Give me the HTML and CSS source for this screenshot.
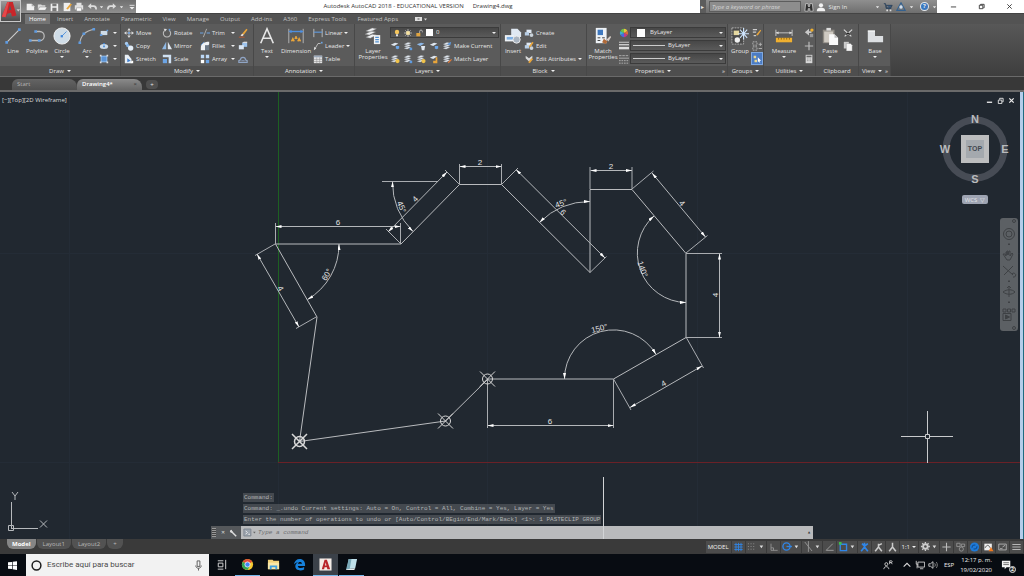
FILE: index.html
```html
<!DOCTYPE html>
<html lang="en">
<head>
<meta charset="utf-8">
<title>Autodesk AutoCAD 2018 - Drawing4.dwg</title>
<link rel="stylesheet" href="styles.css">
</head>
<body>
<svg class="defs" aria-hidden="true">
  <defs>
    <marker id="arw" viewBox="0 0 6 3" refX="6" refY="1.5" markerWidth="6" markerHeight="3" markerUnits="userSpaceOnUse" orient="auto-start-reverse"><path d="M0 0 6 1.500 0 3z" fill="#fff"/></marker>
    <symbol id="down" viewBox="0 0 6 4"><path d="M1 1h4L3 3.600z" fill="#e8e8e8"/></symbol>
    <!-- draw -->
    <symbol id="line" viewBox="0 0 20 20"><path d="M3 17 17 3" stroke="#ccc" stroke-width="1.2"/><path d="M1.500 15.500h3v3h-3zM15.500 1.500h3v3h-3z" fill="#5f9be0"/></symbol>
    <symbol id="pline" viewBox="0 0 20 20"><path d="M2 15h11a5 5 0 0 0 0-10H9" fill="none" stroke="#bbb" stroke-width="1.4"/><path d="M1 13.500h3v3H1zM7 3.500h3v3H7zM11 13.500h3v3h-3z" fill="#5f9be0"/></symbol>
    <symbol id="circle" viewBox="0 0 20 20"><circle cx="10" cy="10" r="9" fill="#cfdce6" stroke="#f4f4f4"/><path d="M10 10 15 5" stroke="#4f8fd8"/><path d="M8.500 9h2.500v2.500H8.500z" fill="#3f86dc"/></symbol>
    <symbol id="arc" viewBox="0 0 20 20"><path d="M2 18C3 9 9 4 18 2.500" fill="none" stroke="#bbb" stroke-width="1.200"/><path d="M.5 16h3v3h-3zM5 6h3v3H5zM16 1h3v3h-3z" fill="#5f9be0"/></symbol>
    <symbol id="rect" viewBox="0 0 12 12"><path d="M2 3.500h8v5H2z" fill="#cfdce8"/><path d="M1 7.500h3v2H1zM9 2h2v2H9z" fill="#5f9be0"/></symbol>
    <symbol id="ellipse" viewBox="0 0 12 12"><ellipse cx="6" cy="6.500" rx="5" ry="3" fill="#cfdce8"/><path d="M5 5.500h2v2H5zM5 2.500h2v1.500H5z" fill="#3f86dc"/></symbol>
    <symbol id="hatch" viewBox="0 0 12 12"><path d="M2 2h8v8H2z" fill="#9cc3ee"/><path d="M3 3h6v6H3z" fill="#5c94d6"/><path d="M1 1h2v2H1zM9 1h2v2H9zM1 9h2v2H1zM9 9h2v2H9z" fill="#ddd"/></symbol>
    <!-- modify -->
    <symbol id="move" viewBox="0 0 12 12"><path d="m6 0 2 3H4zM6 12l2-3H4zM0 6l3-2v4zM12 6 9 4v4z" fill="#ddd"/><path d="M6 3v6M3 6h6" stroke="#ccc"/><path d="M5 5h2v2H5z" fill="#5fa0f0"/></symbol>
    <symbol id="copy" viewBox="0 0 12 12"><circle cx="3" cy="3" r="2" fill="#a8cbf0"/><circle cx="4.500" cy="5.500" r="2" fill="#7fb3ea"/><circle cx="8" cy="8.500" r="3.200" fill="#e4eef8"/></symbol>
    <symbol id="stretch" viewBox="0 0 12 12"><path d="M1 1h4l4 5v5H1z" fill="#e8eef4"/><path d="M4 5v5l4-2z" fill="#3f7fcf"/><path d="M9 8h2v3H8z" fill="#fff"/></symbol>
    <symbol id="rotate" viewBox="0 0 12 12"><path d="M3.500 2.800a4.400 4.400 0 1 0 5 0" fill="none" stroke="#bbb" stroke-width="1.300"/><path d="m2 .8 4 .4-2.200 3z" fill="#ddd"/><path d="M8 1h2v2H8z" fill="#5f9be0"/></symbol>
    <symbol id="mirror" viewBox="0 0 12 12"><path d="M5 1v9H0z" fill="#8fb8e4"/><path d="M7 1v9h5z" fill="#dfe6ee"/></symbol>
    <symbol id="scale" viewBox="0 0 12 12"><path d="M1 1h10v10H8V4H1z" fill="#cfe0f2"/><path d="M1 6h5v5H1z" fill="#6ca4e4"/></symbol>
    <symbol id="trim" viewBox="0 0 12 12"><path d="M0 6h4M8 6h4" stroke="#6ca4e4" stroke-width="1.300"/><path d="M4 11 8 1" stroke="#bbb"/></symbol>
    <symbol id="fillet" viewBox="0 0 12 12"><path d="M1 11V8c0-4 3-7 10-7v3L6 11z" fill="#eef2f6"/><path d="M6 5h5v6H6z" fill="#6b7886"/><path d="M1 5 5 1" stroke="#5f9be0"/></symbol>
    <symbol id="array" viewBox="0 0 12 12"><path d="M1 1h4v4H1zM7 1h4v4H7z" fill="#bcd8f6"/><path d="M1 7h4v4H1z" fill="#fff"/><path d="M7 7h4v4H7z" fill="#6ca4e4"/></symbol>
    <symbol id="erase" viewBox="0 0 12 12"><path d="M5 7 10 1l1.500 1L7 8z" fill="#e9a53a"/><path d="m3 9 2-2 2 1-2 2z" fill="#f4e6dc"/><path d="M1 11h7" stroke="#c65a2a"/></symbol>
    <symbol id="explode" viewBox="0 0 12 12"><path d="M5 2h6v5H5z" fill="#9cc3ee"/><path d="M1 5h6v5H1z" fill="#dbe7f4"/><path d="m5 2 2-1h4v1" fill="#fff"/></symbol>
    <symbol id="offset" viewBox="0 0 12 12"><path d="M1 10V8l2-1a3 3 0 1 1 6 0l2 1v2z" fill="none" stroke="#8fa4c4" stroke-width="1.400"/><path d="M4 8h4" stroke="#8fa4c4"/></symbol>
    <!-- annotation -->
    <symbol id="atext" viewBox="0 0 20 20"><path d="M3 18 10 2l7 16M5.500 12.500h9" fill="none" stroke="#e6e6e6" stroke-width="1.800"/></symbol>
    <symbol id="dim" viewBox="0 0 20 20"><path d="M2 2v16M18 2v16" stroke="#bbb"/><path d="M2 5h16" stroke="#4f8fe0" stroke-width="1.500"/><path d="m2 5 3-2v4zM18 5l-3-2v4z" fill="#4f8fe0"/><path d="m5 16 1.500-3L8 16m2-6v3m0 0-1.500-1M10 13l1.500-1M12 16l1.500-3 1.500 3" fill="none" stroke="#e9a53a" stroke-width="1.600"/></symbol>
    <symbol id="linear" viewBox="0 0 12 12"><path d="M1 1v10M11 1v10" stroke="#ccc"/><path d="M1 5h10" stroke="#5f9be0" stroke-width="1.300"/></symbol>
    <symbol id="leader" viewBox="0 0 12 12"><path d="M2 10 6 3h3" fill="none" stroke="#ccc"/><path d="m1 11 .5-4L4 9z" fill="#ddd"/><path d="M9.500 1h2v2h-2z" fill="#6ca4e4"/></symbol>
    <symbol id="table" viewBox="0 0 12 12"><path d="M1 2h10v9H1z" fill="#e4e4e4"/><path d="M1 2h10v2H1z" fill="#9aa8b8"/><path d="M1 6.500h10M1 9h10M4.500 4v7M8 4v7" stroke="#888" stroke-width=".6"/></symbol>
    <!-- layers -->
    <symbol id="layers" viewBox="0 0 20 20"><path d="M2 4.500 9 1l5 1-7 3.500zM1 8l7-3.500 5 1L6 9zM2 11.500 9 8l5 1-7 3.500z" fill="#eef0f2" stroke="#777" stroke-width=".5"/><path d="M11 9h7v10h-7z" fill="#f2f2f2"/><path d="M12.500 11.500h4M12.500 14h4M12.500 16.500h4" stroke="#4f8fd0" stroke-width="1.200"/></symbol>
    <symbol id="lay" viewBox="0 0 12 12"><path d="m1 4 5-2.500 4 1L5 5zM1 6.500 6 4l4 1-5 2.500zM1 9l5-2.500 4 1L5 10z" fill="#dfe6ee" stroke="#666" stroke-width=".4"/></symbol>
    <symbol id="lay1" viewBox="0 0 12 12"><path d="M1 4.500 6 2l4 1-5 3z" fill="#dfe6ee"/><path d="M7 6h4v3L9 10 7 9z" fill="#6ca4e4"/></symbol>
    <symbol id="lay2" viewBox="0 0 12 12"><use href="#lay"/><path d="M8 8h3v3H8z" fill="#5f9be0"/></symbol>
    <symbol id="lay3" viewBox="0 0 12 12"><path d="m1 4 5-2 4 1-5 3z" fill="#8db8e8"/><path d="M6 6h5l-1 5H7z" fill="#dfe6ee"/></symbol>
    <symbol id="lay4" viewBox="0 0 12 12"><use href="#lay"/><circle cx="9" cy="8.500" r="2.500" fill="#f0c34a"/></symbol>
    <symbol id="lay5" viewBox="0 0 12 12"><path d="M1 4.500 6 2l4 1-5 3z" fill="#dfe6ee"/><path d="M5 8h5v3H5zM8 4h2v4H8z" fill="#e9a53a"/></symbol>
    <symbol id="lay6" viewBox="0 0 12 12"><use href="#lay"/><path d="m7 10 4-4 1 1-4 4z" fill="#e07a3a"/></symbol>
    <symbol id="lay7" viewBox="0 0 12 12"><use href="#lay"/><path d="m6 4 5-3-1 4z" fill="#5f9be0"/></symbol>
    <symbol id="bulb" viewBox="0 0 12 12"><circle cx="6" cy="4.500" r="3.300" fill="#f6c65c"/><path d="M4.500 8h3v3h-3z" fill="#ddd"/></symbol>
    <symbol id="sun" viewBox="0 0 12 12"><path d="M6 0v12M0 6h12M2 2l8 8M10 2l-8 8" stroke="#ddd"/><circle cx="6" cy="6" r="3" fill="#f6e2a0"/></symbol>
    <symbol id="lock" viewBox="0 0 12 12"><path d="M7 6V3.500a2 2 0 0 1 4 0V5" fill="none" stroke="#ccc" stroke-width="1.200"/><path d="M2 6h6v5H2z" fill="#e0a440"/></symbol>
    <!-- block -->
    <symbol id="insert" viewBox="0 0 20 20"><path d="M8 2h7l4 4v5H8z" fill="#dfe8f2"/><path d="M1 9h10v7H1z" fill="#eef2f6"/><path d="M3 11h8v3H3z" fill="#7fb0e4"/><circle cx="14" cy="14" r="4" fill="#a9b4c0" stroke="#eee"/></symbol>
    <symbol id="create" viewBox="0 0 12 12"><path d="M3 2h6v4H3z" fill="#dfe8f2"/><path d="M1 5h5v4H1z" fill="#b9cfe6"/><circle cx="9" cy="8.500" r="2.300" fill="#c9d2da"/></symbol>
    <symbol id="edit" viewBox="0 0 12 12"><use href="#create"/><path d="m6 6 4-5 1.500 1L7 8z" fill="#e9a53a"/></symbol>
    <symbol id="attr" viewBox="0 0 12 12"><path d="m2 2 4 3 4-3v3L6 9 2 5z" fill="#d8d8d8"/><path d="m5 10 4-5 2 1-4 5z" fill="#e9a53a"/></symbol>
    <!-- properties -->
    <symbol id="match" viewBox="0 0 20 20"><path d="M2 1h12v17H2z" fill="#eef2f6"/><path d="M4 3h6v6H4z" fill="#3f78bf"/><path d="M4 12h3M4 15h3M9 12h3" stroke="#333"/><path d="m9 17 2-4 4 3-2 3z" fill="#b06a38"/><path d="m14 14 4-4 1 1-3 5z" fill="#d9cfc8"/></symbol>
    <symbol id="wheel" viewBox="0 0 12 12"><path d="M6 6V1a5 5 0 0 1 4.300 2.500z" fill="#e8c53a"/><path d="m6 6 4.300-2.500a5 5 0 0 1 0 5z" fill="#e06a3a"/><path d="m6 6 4.300 2.500A5 5 0 0 1 6 11z" fill="#c23a8a"/><path d="M6 6v5a5 5 0 0 1-4.300-2.500z" fill="#4a6ae0"/><path d="M6 6 1.700 8.500a5 5 0 0 1 0-5z" fill="#3ab0d0"/><path d="M6 6 1.700 3.500A5 5 0 0 1 6 1z" fill="#6cc04a"/></symbol>
    <symbol id="lw" viewBox="0 0 12 12"><path d="M0 1.500h12" stroke="#ddd"/><path d="M0 4.500h12" stroke="#ddd" stroke-width="1.500"/><path d="M0 8.500h12" stroke="#ddd" stroke-width="3"/></symbol>
    <symbol id="lt" viewBox="0 0 12 12"><path d="M0 2h12" stroke="#bbb" stroke-dasharray="3 1"/><path d="M0 5h12" stroke="#bbb"/><path d="M0 8h12M0 11h12" stroke="#bbb" stroke-dasharray="2 1"/></symbol>
    <!-- groups, utilities, clipboard, view -->
    <symbol id="group" viewBox="0 0 20 20"><path d="M1 1h13v18H1z" fill="#4a4a4a" stroke="#ccc" stroke-width=".8" stroke-dasharray="2 1"/><path d="M3 4h6v5H3z" fill="#e6d9a0"/><circle cx="7" cy="14.500" r="3" fill="#f0f0f0"/><path d="M14 1v13M8 7.500h12M10 3l8 9M18 3l-8 9" stroke="#cfe6ff" stroke-width="1.200"/></symbol>
    <symbol id="ungrp" viewBox="0 0 12 12"><path d="M1 2h5M1 5h4M2 9h3" stroke="#ccc" stroke-width="1.500"/><path d="m5 8 5-6 1 1-4 6z" fill="#e9a53a"/></symbol>
    <symbol id="grped" viewBox="0 0 12 12"><path d="M1 1h5v4H1zM1 7h5v4H1z" fill="none" stroke="#bbb" stroke-dasharray="2 1"/><path d="M8 4h4M10 2v4M8 9h4" stroke="#bbb"/></symbol>
    <symbol id="grpsel" viewBox="0 0 12 12"><path d="M2 2h3v3H2zM3 7h3v3H3z" fill="#e8d690"/><path d="m7 4 4 4H9l1 3-2-2-1 1z" fill="#fff"/></symbol>
    <symbol id="measure" viewBox="0 0 20 20"><path d="M1 3v7M19 3v7M1 6.500h18" stroke="#ccc"/><path d="m1 6.500 3-1.500v3zM19 6.500 16 5v3z" fill="#ddd"/><path d="M1 12h18v5H1z" fill="#f0b030"/><path d="M4 12v2M7 12v2M10 12v2M13 12v2M16 12v2" stroke="#7a5200" stroke-width=".8"/></symbol>
    <symbol id="idp" viewBox="0 0 12 12"><path d="m1 5 5-4v3h3v2H6v3z" fill="#c8c8c8"/><circle cx="9.500" cy="2.500" r="2" fill="#f0b030"/><path d="M7 7h4v4H7z" fill="#999"/></symbol>
    <symbol id="point" viewBox="0 0 12 12"><path d="M6 1v10M1 6h10" stroke="#bbb" stroke-width="1.400"/></symbol>
    <symbol id="calc" viewBox="0 0 12 12"><path d="M2 1h8v10H2z" fill="#d8d8d8"/><path d="M3 2h6v2H3z" fill="#666"/><path d="M3.500 6h5M3.500 8h5" stroke="#777" stroke-dasharray="1 1"/></symbol>
    <symbol id="paste" viewBox="0 0 20 20"><path d="M2 3h13v15H2z" fill="#8f8b84"/><path d="M3.500 5h10v12h-10z" fill="#cfcac2"/><path d="M6 1h5v3H6z" fill="#ddd"/><path d="M9 8h6l4 4v8H9z" fill="#fafafa"/><path d="M15 8v4h4" fill="#bbb"/></symbol>
    <symbol id="cut" viewBox="0 0 12 12"><path d="m1 2 9 8M11 2 2 10" stroke="#ddd" stroke-width="1.300"/><path d="m4 8 2-2 2 2" stroke="#222" stroke-width="1.400" fill="none"/></symbol>
    <symbol id="copyc" viewBox="0 0 12 12"><path d="M1 1h6v8H1z" fill="#ccc"/><path d="M4 3h5l2 2v7H4z" fill="#f6f6f6" stroke="#777" stroke-width=".4"/></symbol>
    <symbol id="base" viewBox="0 0 20 20"><path d="M2 4h8v6h9v7H2z" fill="#dcdfe2"/><path d="M2 4h8v1H2z" fill="#fff"/></symbol>
  </defs>
</svg>

<header class="titlebar">
  <div class="quick">
    <button class="applogo" aria-label="Application menu"><svg viewBox="0 0 22 22"><path d="M1 17 7 1h6l4 15-5 1-1-4-4 1-2 4z" fill="#c8262a"/><path d="m8.500 10 1.500-5 1.500 5z" fill="#58595b"/><path d="M7 1h2L5 18l-4-1z" fill="#e5484a"/><path d="M17 9h4l-2 2.500z" fill="#ccc"/></svg></button>
    <button aria-label="New"><svg viewBox="0 0 12 12"><path d="M2 2h6l3 3v5H2z" fill="#f0f0f0"/><path d="M8 2v3h3" fill="#aaa"/></svg></button>
    <button aria-label="Open"><svg viewBox="0 0 12 12"><path d="M1 3h4l1 1h4v5H1z" fill="#d9d9d9"/><path d="M3 6h9l-2 4H1z" fill="#f4f4f4" stroke="#666" stroke-width=".5"/></svg></button>
    <button aria-label="Save"><svg viewBox="0 0 12 12"><path d="M2 2h9v9H2z" fill="#eee"/><path d="M4 2h5v3H4zM4 7h5v4H4z" fill="#777"/></svg></button>
    <button aria-label="Save as"><svg viewBox="0 0 12 12"><path d="M2 1h8v10H2z" fill="#eee"/><path d="m5 8 5-6 2 1-5 6z" fill="#e9a53a"/></svg></button>
    <button aria-label="Plot"><svg viewBox="0 0 12 12"><path d="M3 1h6v3H3zM1 4h10v5H1z" fill="#e2e2e2"/><path d="M3 7h6v4H3z" fill="#fff" stroke="#777" stroke-width=".5"/></svg></button>
    <button aria-label="Undo"><svg viewBox="0 0 12 12"><path d="M4 5h4c2 0 3 1 3 4" fill="none" stroke="#ddd" stroke-width="2"/><path d="m1 5 4-3.500v7z" fill="#ddd"/></svg></button>
    <button class="tiny" aria-label="Undo list"><svg viewBox="0 0 6 4"><use href="#down"/></svg></button>
    <button aria-label="Redo"><svg viewBox="0 0 12 12"><path d="M8 5H4C2 5 1 6 1 9" fill="none" stroke="#ddd" stroke-width="2"/><path d="M11 5 7 1.500v7z" fill="#ddd"/></svg></button>
    <button class="tiny" aria-label="Redo list"><svg viewBox="0 0 6 4"><use href="#down"/></svg></button>
    <button class="more" aria-label="Customize"><svg viewBox="0 0 12 12"><path d="M3 4h6" stroke="#eee"/><path d="M3 6h6L6 9z" fill="#eee"/></svg></button>
  </div>
  <h1 class="title"><span>Autodesk AutoCAD 2018 - EDUCATIONAL VERSION</span><span>Drawing4.dwg</span></h1>
  <div class="info">
    <button class="expand" aria-label="Collapse search">▸</button>
    <input class="keyword" type="text" placeholder="Type a keyword or phrase" aria-label="Search help">
    <button aria-label="Find"><svg viewBox="0 0 12 12"><path d="M2 2h3v3l1 1 1-1V2h3l1 9H7V8H5v3H1z" fill="#2e2e2e" stroke="#ddd" stroke-width=".8"/></svg></button>
    <button class="sign"><svg viewBox="0 0 12 12"><circle cx="6" cy="4" r="2.500" fill="#f2f2f2"/><path d="M1 11c0-4 3-4 5-4s5 0 5 4z" fill="#f2f2f2"/></svg>Sign In</button>
    <button class="tiny" aria-label="Account menu"><svg viewBox="0 0 6 4"><use href="#down"/></svg></button>
    <button aria-label="Store"><svg viewBox="0 0 12 12"><path d="M1 2h2l1 6h6M3.500 4H11L9.500 7H4z" fill="#38587c" stroke="#2c4158"/><path d="M4 9h2v2H4zM8 9h2v2H8z" fill="#ddd"/></svg></button>
    <button aria-label="Stay connected"><svg viewBox="0 0 12 12"><path d="m6 1 5 9H1z" fill="none" stroke="#34618f" stroke-width="1.400"/><circle cx="6" cy="6" r="2" fill="#cfe0f2"/></svg></button>
    <button class="tiny" aria-label="Connect menu"><svg viewBox="0 0 6 4"><use href="#down"/></svg></button>
    <button class="help" aria-label="Help">?</button>
    <button class="tiny" aria-label="Help menu"><svg viewBox="0 0 6 4"><use href="#down"/></svg></button>
  </div>
  <div class="winbtns">
    <button aria-label="Minimize"><svg viewBox="0 0 8 8"><path d="M1 4.500h6" stroke="#333"/></svg></button>
    <button aria-label="Restore"><svg viewBox="0 0 8 8"><path d="M1.500 2.500h4v4h-4zM3 2.500V1.500h4v4H6" fill="none" stroke="#333"/></svg></button>
    <button aria-label="Close"><svg viewBox="0 0 8 8"><path d="m1.500 1.500 5 5M6.500 1.500l-5 5" stroke="#333"/></svg></button>
  </div>
</header>

<nav class="tabs">
  <a class="on" href="#home">Home</a><a href="#insert-tab">Insert</a><a href="#annotate">Annotate</a><a href="#param">Parametric</a><a href="#view">View</a><a href="#manage">Manage</a><a href="#output">Output</a><a href="#addins">Add-ins</a><a href="#a360">A360</a><a href="#express">Express Tools</a><a href="#featured">Featured Apps</a>
  <button aria-label="Ribbon display"><svg viewBox="0 0 14 8"><path d="M1 2h7v4H1z" fill="#ddd"/><path d="M3.500 3.500h2v1h-2z" fill="#555"/><path d="M10 3.500h3l-1.500 2z" fill="#ddd"/></svg></button>
</nav>

<main class="ribbon">
  <section class="panel p-draw">
    <div class="tools">
      <button class="big w24"><svg><use href="#line"/></svg>Line</button>
      <button class="big w24"><svg><use href="#pline"/></svg>Polyline</button>
      <button class="big w26"><svg><use href="#circle"/></svg>Circle<i class="dd"></i></button>
      <button class="big w24"><svg><use href="#arc"/></svg>Arc<i class="dd"></i></button>
      <div class="col">
        <button class="sm" aria-label="Rectangle"><svg><use href="#rect"/></svg><i class="dd"></i></button>
        <button class="sm" aria-label="Ellipse"><svg><use href="#ellipse"/></svg><i class="dd"></i></button>
        <button class="sm" aria-label="Hatch"><svg><use href="#hatch"/></svg><i class="dd"></i></button>
      </div>
    </div>
    <h2>Draw<i class="dd"></i></h2>
  </section>
  <section class="panel p-modify">
    <div class="tools">
      <div class="col w38">
        <button class="sm"><svg><use href="#move"/></svg>Move</button>
        <button class="sm"><svg><use href="#copy"/></svg>Copy</button>
        <button class="sm"><svg><use href="#stretch"/></svg>Stretch</button>
      </div>
      <div class="col w38">
        <button class="sm"><svg><use href="#rotate"/></svg>Rotate</button>
        <button class="sm"><svg><use href="#mirror"/></svg>Mirror</button>
        <button class="sm"><svg><use href="#scale"/></svg>Scale</button>
      </div>
      <div class="col w38">
        <button class="sm"><svg><use href="#trim"/></svg>Trim<i class="dd end"></i></button>
        <button class="sm"><svg><use href="#fillet"/></svg>Fillet<i class="dd end"></i></button>
        <button class="sm"><svg><use href="#array"/></svg>Array<i class="dd end"></i></button>
      </div>
      <div class="col">
        <button class="sm" aria-label="Erase"><svg><use href="#erase"/></svg></button>
        <button class="sm" aria-label="Explode"><svg><use href="#explode"/></svg></button>
        <button class="sm" aria-label="Offset"><svg><use href="#offset"/></svg></button>
      </div>
    </div>
    <h2>Modify<i class="dd"></i></h2>
  </section>
  <section class="panel p-annot">
    <div class="tools">
      <button class="big w24"><svg><use href="#atext"/></svg>Text<i class="dd"></i></button>
      <button class="big w34"><svg><use href="#dim"/></svg>Dimension</button>
      <div class="col w38">
        <button class="sm"><svg><use href="#linear"/></svg>Linear<i class="dd end"></i></button>
        <button class="sm"><svg><use href="#leader"/></svg>Leader<i class="dd end"></i></button>
        <button class="sm"><svg><use href="#table"/></svg>Table</button>
      </div>
    </div>
    <h2>Annotation<i class="dd"></i></h2>
  </section>
  <section class="panel p-layers">
    <div class="tools">
      <button class="big w34"><svg><use href="#layers"/></svg>Layer<br>Properties</button>
      <div class="col grow">
        <div class="combo"><svg><use href="#bulb"/></svg><svg><use href="#sun"/></svg><svg><use href="#lock"/></svg><b class="swatch"></b><select aria-label="Layer"><option>0</option></select><i class="dd"></i></div>
        <div class="row">
          <button class="sm" aria-label="Off"><svg><use href="#lay1"/></svg></button>
          <button class="sm" aria-label="Isolate"><svg><use href="#lay2"/></svg></button>
          <button class="sm" aria-label="Freeze"><svg><use href="#lay3"/></svg></button>
          <button class="sm" aria-label="Lock"><svg><use href="#lay1"/></svg></button>
          <button class="sm"><svg><use href="#lay7"/></svg>Make Current</button>
        </div>
        <div class="row">
          <button class="sm" aria-label="On"><svg><use href="#lay4"/></svg></button>
          <button class="sm" aria-label="Unisolate"><svg><use href="#lay2"/></svg></button>
          <button class="sm" aria-label="Thaw"><svg><use href="#lay4"/></svg></button>
          <button class="sm" aria-label="Unlock"><svg><use href="#lay5"/></svg></button>
          <button class="sm"><svg><use href="#lay6"/></svg>Match Layer</button>
        </div>
      </div>
    </div>
    <h2>Layers<i class="dd"></i></h2>
  </section>
  <section class="panel p-block">
    <div class="tools">
      <button class="big w22"><svg><use href="#insert"/></svg>Insert</button>
      <div class="col grow">
        <button class="sm"><svg><use href="#create"/></svg>Create</button>
        <button class="sm"><svg><use href="#edit"/></svg>Edit</button>
        <button class="sm"><svg><use href="#attr"/></svg>Edit Attributes<i class="dd end"></i></button>
      </div>
    </div>
    <h2>Block<i class="dd"></i></h2>
  </section>
  <section class="panel p-props">
    <div class="tools">
      <button class="big w30"><svg><use href="#match"/></svg>Match<br>Properties</button>
      <div class="col">
        <button class="sm" aria-label="Color"><svg><use href="#wheel"/></svg></button>
        <button class="sm" aria-label="Lineweight"><svg><use href="#lw"/></svg></button>
        <button class="sm" aria-label="Linetype"><svg><use href="#lt"/></svg></button>
      </div>
      <div class="col grow">
        <div class="combo"><b class="swatch wide"></b><select aria-label="Object color"><option>ByLayer</option></select><i class="dd"></i></div>
        <div class="combo"><b class="rule"></b><select aria-label="Lineweight"><option>ByLayer</option></select><i class="dd"></i></div>
        <div class="combo"><b class="rule"></b><select aria-label="Linetype"><option>ByLayer</option></select><i class="dd"></i></div>
      </div>
    </div>
    <h2>Properties<i class="dd"></i><span class="launch">»</span></h2>
  </section>
  <section class="panel p-groups">
    <div class="tools">
      <button class="big w22"><svg><use href="#group"/></svg>Group</button>
      <div class="col">
        <button class="sm" aria-label="Ungroup"><svg><use href="#ungrp"/></svg></button>
        <button class="sm" aria-label="Group edit"><svg><use href="#grped"/></svg></button>
        <button class="sm sel" aria-label="Group selection"><svg><use href="#grpsel"/></svg></button>
      </div>
    </div>
    <h2>Groups<i class="dd"></i></h2>
  </section>
  <section class="panel p-util">
    <div class="tools">
      <button class="big w38"><svg><use href="#measure"/></svg>Measure<i class="dd"></i></button>
      <div class="col">
        <button class="sm" aria-label="ID point"><svg><use href="#idp"/></svg></button>
        <button class="sm" aria-label="Point style"><svg><use href="#point"/></svg></button>
        <button class="sm" aria-label="Calculator"><svg><use href="#calc"/></svg></button>
      </div>
    </div>
    <h2>Utilities<i class="dd"></i></h2>
  </section>
  <section class="panel p-clip">
    <div class="tools">
      <button class="big w26"><svg><use href="#paste"/></svg>Paste<i class="dd"></i></button>
      <div class="col">
        <button class="sm" aria-label="Cut"><svg><use href="#cut"/></svg></button>
        <button class="sm" aria-label="Copy clip"><svg><use href="#copyc"/></svg></button>
      </div>
    </div>
    <h2>Clipboard</h2>
  </section>
  <section class="panel p-view">
    <div class="tools"><button class="big w30"><svg><use href="#base"/></svg>Base<i class="dd"></i></button></div>
    <h2>View<i class="dd"></i><span class="launch">»</span></h2>
  </section>
</main>

<nav class="files">
  <a href="#start">Start</a>
  <a class="on" href="#d4">Drawing4*<span class="x">×</span></a>
  <button aria-label="New drawing">+</button>
</nav>

<div class="stage">
  <svg class="drawing" viewBox="0 92 1024 447" preserveAspectRatio="xMinYMin slice">
    <g stroke="#242c36" fill="none"><path d="M69.500 92v447M487.500 92v447M697.500 92v447M907.500 92v447M0 253.500h1020M0 462.500h278M278.500 462v77"/></g>
    <path d="M278.500 92v370" stroke="#1d6022"/>
    <path d="M278 462.500h742" stroke="#6a2127"/>
    <g class="shape">
      <path d="M275.500 244 401 244 459.500 184.500H501.500L590 272.500V189.500H632L686 253.500V337.500L613.500 379H488L445.500 421 299.500 441.500 317 317z"/>
    </g>
    <g class="ext">
      <path d="M275.500 244v-21M400.500 244v-21M275 244l-20 11.500M317 316.500l-21 12M382 181.500h56M401 244l-15-15M459.500 184.500 445 170M459.500 184v-20M501.500 184v-20M501.500 184.500 518 168M590 272.500 606.500 256.500M590 189v-22M632 189v-22M632 189l21.500-18M686 253l21.500-17.500M686 253.500h36M686 337.500h36M686 337l17.500 31M613.500 379l17.500 31M487.500 379v49M613.500 379v49"/>
    </g>
    <g class="dims">
      <path d="M275.500 226.500H400.500"/><path d="M257 254 299 327"/><path d="M388 232 447 172"/><path d="M459.500 166.500h42"/><path d="M516 169.500 605 258"/><path d="M590.500 170.500H632"/><path d="M652 173 705.500 237"/><path d="M719.500 253.500v84"/><path d="M630 407.500 702 366"/><path d="M487.500 425.500h126"/>
      <path d="M339 244A64 64 0 0 1 307.500 299.500"/><path d="M392.500 181.500A70 70 0 0 0 413 231.500"/><path d="M590 201.500A71 71 0 0 0 539.500 222.500"/><path d="M654 216A49.500 49.500 0 0 0 686 302.500"/><path d="M564.500 379A49 49 0 0 1 656 354.500"/>
    </g>
    <g class="dimtext">
      <text x="338" y="225">6</text><text transform="translate(278 290) rotate(60)">4</text><text transform="translate(329 276) rotate(-60)">60°</text><text transform="translate(399 208) rotate(67)">45°</text><text transform="translate(417 201) rotate(-45)">4</text><text x="480" y="165">2</text><text transform="translate(561 214) rotate(45)">6</text><text transform="translate(562 206) rotate(-20)">45°</text><text x="611" y="169">2</text><text transform="translate(680 205) rotate(50)">4</text><text transform="translate(640 270) rotate(70)">140°</text><text transform="translate(718 295) rotate(-90)">4</text><text transform="translate(665 386) rotate(-30)">4</text><text transform="translate(600 331) rotate(-14)">150°</text><text x="550" y="424">6</text>
    </g>
    <g class="nodes">
      <g><circle cx="487.500" cy="379" r="5"/><path d="m480 371.500 15 15m0-15-15 15"/></g>
      <g><circle cx="445.500" cy="421" r="5"/><path d="m438 413.500 15 15m0-15-15 15"/></g>
      <g stroke-width="1.500"><circle cx="299.500" cy="441.500" r="5"/><path d="m292 434 15 15m0-15-15 15"/></g>
    </g>
    <g stroke="#c9cbcd" fill="none"><path d="M901 436.500h24M929 436.500h24M927.500 411v24M927.500 439v24M925.500 434.500h4v4h-4z"/></g>
    <g stroke="#b6b9bc" fill="none"><path d="M8.500 525.500h5v5h-5zM11.500 528V502M11 528.500h27M12 492l3 4 3-4M15 496v4M40 520.500l7 7M47 520.500l-7 7"/></g>
  </svg>

  <button class="vplabel">[−][Top][2D Wireframe]</button>
  <div class="docbtns"><button aria-label="Minimize drawing"><svg viewBox="0 0 8 8"><path d="M1 6h6" stroke="#eee" stroke-width="1.500"/></svg></button><button aria-label="Restore drawing"><svg viewBox="0 0 8 8"><path d="M1.500 3.500h4v4h-4zM3 3V1.500h4v4H6" fill="none" stroke="#eee"/></svg></button><button aria-label="Close drawing"><svg viewBox="0 0 8 8"><path d="m1.500 1.500 5 5M6.500 1.500l-5 5" stroke="#eee" stroke-width="1.400"/></svg></button></div>
  <div class="cube">
    <svg viewBox="0 0 74 74"><circle cx="37" cy="37" r="29" fill="none" stroke="#474c55" stroke-width="7"/><path d="M23 23h28v28H23z" fill="#bcbdbe"/><path d="M28 28h18v18H28z" fill="#a4a9ae"/>
      <g class="compass"><text x="37" y="11">N</text><text x="37" y="71">S</text><text x="7" y="41">W</text><text x="67" y="41">E</text></g><text class="face" x="37" y="39">TOP</text></svg>
    <button class="wcs">WCS<span>▽</span></button>
  </div>
  <div class="navbar">
    <svg viewBox="0 0 18 113" fill="none" stroke="#3e4144"><circle cx="14" cy="3" r="1.500"/><circle cx="9" cy="16" r="5.500"/><circle cx="9" cy="16" r="3"/><path d="m9 27-1-1h2zM5 39l-2-3 2 0 1 2v-4l1 0 0 3 0-4h1v4l1-4 1 0v5l2-3 1 1-3 6H7zM3 48l10 9M13 48l-9 9M12 56a2 2 0 1 1 1 3M9 64l-1-1h2zM9 68v11M3 74c4-3 9-3 12 0-3 3-8 3-12 0M7 70l2-2 2 2M9 85l-1-1h2zM3 91h3v3H3zM7.500 91h3v3h-3zM12 91h3v3h-3zM3 95.500h8v7H3z"/><path d="m5.500 97 4 2-4 2z" fill="#3e4144"/><circle cx="14" cy="110" r="1.500"/></svg>
  </div>
  <div class="cmd">
    <div class="hist"><p>Command:</p><p>Command: _.undo Current settings: Auto = On, Control = All, Combine = Yes, Layer = Yes</p><p>Enter the number of operations to undo or [Auto/Control/BEgin/End/Mark/Back] &lt;1&gt;: 1 PASTECLIP GROUP</p></div>
    <div class="cmdbar">
      <span class="grip"></span>
      <button aria-label="Close command line">✕</button>
      <button aria-label="Customize command line"><svg viewBox="0 0 10 10"><path d="M2 1.500 4 4 9 9" stroke="#ddd" stroke-width="1.800" fill="none"/><path d="M1 3a2.500 2.500 0 0 0 4 1l-2-3" fill="#ddd"/></svg></button>
      <label class="field"><svg viewBox="0 0 16 10"><path d="M1 1h8v8H1z" fill="#9ba3ad" stroke="#7d858f"/><path d="m3 3 2 2-2 2M6 7h2" fill="none" stroke="#eee"/><path d="M11.500 4h3L13 6z" fill="#666"/></svg><input type="text" placeholder="Type a command" aria-label="Command"></label>
      <button class="up" aria-label="Recent commands">▴</button>
    </div>
  </div>
  <div class="caret"></div>
</div>

<footer class="status">
  <nav class="layouts"><a class="on" href="#model">Model</a><a href="#l1">Layout1</a><a href="#l2">Layout2</a><a class="plus" href="#new">+</a></nav>
  <div class="toggles">
    <button class="txt">MODEL</button>
    <button class="cell" aria-label="Grid"><svg viewBox="0 0 12 12"><path d="M1 3h10M1 6h10M1 9h10M3 1v10M6 1v10M9 1v10" stroke="#2f86e8"/></svg></button>
    <button class="cell dbl" aria-label="Snap"><svg viewBox="0 0 20 12"><path d="M1 3h9M1 6h9M1 9h9" stroke="#999" stroke-dasharray="1 2"/><path d="M14 5h4l-2 3z" fill="#ddd"/></svg></button>
    <button class="cell" aria-label="Ortho"><svg viewBox="0 0 12 12"><path d="M3 2v8h8M3 7h3v3" fill="none" stroke="#999"/></svg></button>
    <button class="cell dbl" aria-label="Polar"><svg viewBox="0 0 20 12"><circle cx="5" cy="6" r="4" fill="none" stroke="#2f86e8" stroke-width="1.500"/><path d="M5 6h6" stroke="#2f86e8" stroke-width="1.500"/><path d="M14 5h4l-2 3z" fill="#ddd"/></svg></button>
    <button class="cell dbl" aria-label="Isodraft"><svg viewBox="0 0 20 12"><path d="m2 1 8 10M6 0v12" stroke="#999"/><path d="M14 5h4l-2 3z" fill="#ddd"/></svg></button>
    <button class="cell" aria-label="Tracking"><svg viewBox="0 0 12 12"><path d="M2 10 10 2M2 10h9" stroke="#999" stroke-width="1.200" fill="none"/></svg></button>
    <button class="cell dbl" aria-label="Object snap"><svg viewBox="0 0 20 12"><path d="M2.500 3.500h7v7h-7z" fill="none" stroke="#2f86e8" stroke-width="1.500"/><path d="M1 1h3v3H1z" fill="#3fbf4a"/><path d="M14 5h4l-2 3z" fill="#ddd"/></svg></button>
    <button class="cell" aria-label="Annotation visibility"><svg viewBox="0 0 12 12"><path d="M6 1v5l4 5M6 6l-4 5M3 2l3 3 4-3" fill="none" stroke="#2f86e8" stroke-width="2"/></svg></button>
    <button class="cell" aria-label="Auto scale"><svg viewBox="0 0 12 12"><path d="M6 2v4l4 5M6 6l-4 5M6 4l4-2" fill="none" stroke="#ccc" stroke-width="1.800"/></svg></button>
    <button class="cell" aria-label="Annotation scale"><svg viewBox="0 0 12 12"><path d="M6 1v5l4 5M6 6l-4 5" fill="none" stroke="#ccc" stroke-width="1.800"/></svg></button>
    <button class="txt">1:1<i class="dd"></i></button>
    <button class="cell dbl" aria-label="Workspace"><svg viewBox="0 0 20 12"><circle cx="6" cy="6" r="2.500" fill="none" stroke="#ccc" stroke-width="2"/><path d="M6 1v2M6 9v2M1 6h2M9 6h2M2.500 2.500l1 1M8.500 8.500l1 1M9.500 2.500l-1 1M3.500 8.500l-1 1" stroke="#ccc" stroke-width="1.500"/><path d="M14 5h4l-2 3z" fill="#ddd"/></svg></button>
    <button class="cell" aria-label="Monitor"><svg viewBox="0 0 12 12"><path d="M6 1v10M1 6h10" stroke="#bbb" stroke-width="1.300"/></svg></button>
    <button class="cell" aria-label="Isolate"><svg viewBox="0 0 12 12"><path d="M1.500 1.500h4v4h-4zM7 2.500h4v3H7z" fill="none" stroke="#999"/><circle cx="7" cy="8.500" r="2.500" fill="none" stroke="#999"/></svg></button>
    <button class="cell" aria-label="Hardware"><svg viewBox="0 0 12 12"><circle cx="6" cy="6" r="5.500" fill="#1e7ad8"/><path d="M3 7c0-3 2-4 4-3M9 5c0 3-2 4-4 3" fill="none" stroke="#0e4a90" stroke-width="1.300"/></svg></button>
    <button class="cell" aria-label="Graphics"><svg viewBox="0 0 12 12"><path d="M1 2h9v8H1z" fill="#eee"/><path d="M2 7c2-4 4-4 6 0" fill="none" stroke="#444"/><path d="m9 6 3 5H6z" fill="#f07a20"/></svg></button>
    <button class="cell" aria-label="Clean screen"><svg viewBox="0 0 12 12"><path d="M1.500 2.500h9v7h-9zM6 6l3-2M3 8h3" fill="none" stroke="#bbb"/></svg></button>
    <button class="cell" aria-label="Customization"><svg viewBox="0 0 12 12"><path d="M1 3h10M1 6h10M1 9h10" stroke="#ccc"/></svg></button>
  </div>
</footer>

<footer class="taskbar">
  <button class="start" aria-label="Start"><svg viewBox="0 0 10 10"><path d="M0 1.500 4.500 1v3.700H0zM5.200.9 10 .2v4.500H5.200zM0 5.400h4.500V9L0 8.500zM5.200 5.400H10v4.500l-4.800-.7z" fill="#fff"/></svg></button>
  <label class="find"><svg viewBox="0 0 12 12"><circle cx="6" cy="6" r="4.800" fill="none" stroke="#1c1c1c" stroke-width="1.600"/></svg><input type="text" placeholder="Escribe aquí para buscar" aria-label="Buscar"><svg viewBox="0 0 12 12"><path d="M4.500 1h3v6h-3zM3 6c0 4 6 4 6 0M6 9v2.500" fill="none" stroke="#555"/></svg></label>
  <div class="apps">
    <button aria-label="Task view"><svg viewBox="0 0 14 14"><path d="M3.500 5.500h5v4h-5zM3 3h6M3 12h6M11.500 2v10" fill="none" stroke="#ddd"/></svg></button>
    <button class="run" aria-label="Chrome"><svg viewBox="0 0 14 14"><circle cx="7" cy="7" r="6" fill="#f7c92f"/><path d="M7 7 1.800 4A6 6 0 0 1 12.200 4z" fill="#df4a36"/><path d="M7 7 1.800 4A6 6 0 0 0 7 13l2.500-4.500z" fill="#2fa457"/><circle cx="7" cy="7" r="2.800" fill="#4285f4" stroke="#fff" stroke-width=".8"/></svg></button>
    <button aria-label="Explorer"><svg viewBox="0 0 14 14"><path d="M1 2h5l1 1h6v9H1z" fill="#f3d279"/><path d="M1 5h12v7H1z" fill="#fbe7a6"/><path d="M3 8h8v4H9v-2H5v2H3z" fill="#3f9fe0"/></svg></button>
    <button aria-label="Edge"><svg viewBox="0 0 14 14"><path d="M1 7C1.500 3 4 1 7.200 1 11 1 13 3.700 13 7v1.500H5.200c.3 2.700 4 3 6.800 1.300v2.700C8 14.500 2.500 13.500 2.500 9c0-2 1-3.500 3-4.500C3.500 4.700 2 5.500 1 7zM5.300 6.300h4.400C9.700 3.500 5.600 3.500 5.300 6.300z" fill="#1681dc" fill-rule="evenodd"/></svg></button>
    <button class="run active" aria-label="AutoCAD"><svg viewBox="0 0 14 14"><path d="M.5.5h13v13H.5z" fill="#f3ece6"/><path d="M3 12 6 2h2.500L12 12H9L8.500 10H6l-.5 2z" fill="#b8262a"/><path d="M6.500 8 7.200 4.500 8 8z" fill="#f3ece6"/></svg></button>
    <button class="run" aria-label="Notes"><svg viewBox="0 0 14 14"><path d="M4 1h9l-2 10-9 1z" fill="#bfe0ea"/><path d="m4 1 3 0-2 11-4 1z" fill="#7aa9b8"/><path d="m2 12 9-1-1 2H1z" fill="#e8eef0"/></svg></button>
  </div>
  <div class="tray">
    <svg viewBox="0 0 12 12"><circle cx="4" cy="5" r="1.800" fill="none" stroke="#ddd"/><path d="M1 11c0-4 6-4 6 0M8 5V1h2c1.500 0 1.500 2 0 2H8m2 0 1 2" fill="none" stroke="#ddd"/></svg>
    <svg class="chev" viewBox="0 0 12 12"><path d="m2 8 4-4 4 4" fill="none" stroke="#ddd" stroke-width="1.300"/></svg>
    <svg viewBox="0 0 12 12"><path d="M3.500 2.500h8v6h-8zM1.500 1v4h2M6 10.500h4M2.500 5v5" fill="none" stroke="#ddd"/></svg>
    <svg viewBox="0 0 12 12"><path d="M1 4.500h2l3-2.500v8L3 7.500H1z" fill="none" stroke="#ddd"/><path d="M8 4c1 1 1 3 0 4M10 2.500c1.500 2 1.500 5 0 7" fill="none" stroke="#999"/></svg>
    <span class="lang">ESP</span>
    <time class="clock">12:17 p. m.<br>19/02/2020</time>
    <button class="note" aria-label="Notifications"><svg viewBox="0 0 14 14"><path d="M1 2h9v7H6l-2 2V9H1z" fill="#f4f4f4"/><path d="M2.500 4h6M2.500 6h6" stroke="#333" stroke-width=".7"/></svg><b>2</b></button>
  </div>
</footer>
</body>
</html>
```
FILE: styles.css
```css
* { box-sizing: border-box; }
html, body { height: 100%; }
body {
  margin: 0;
  display: flex;
  flex-direction: column;
  overflow: hidden;
  background: #383838;
  color: #e6e6e6;
  font: 6px/8px "Open Sans", "Noto Sans", sans-serif;
}
button, input, select { appearance: none; border: 0; padding: 0; margin: 0; background: none; color: inherit; font: inherit; border-radius: 0; min-width: 0; outline: 0; }
a { color: inherit; text-decoration: none; }
h1, h2, p { margin: 0; font: inherit; }
svg { display: block; flex: none; }
.defs { position: absolute; width: 0; height: 0; }
.dd { width: 0; height: 0; border: 2px solid transparent; border-top-color: #f0f0f0; border-bottom-width: 0; flex: none; }

/* title bar */
.titlebar { display: flex; height: 13px; flex: none; background: #fff; }
.quick { width: 136px; display: flex; align-items: center; gap: 3px; background: linear-gradient(#6f6f6f, #8f8f8f); }
.quick button svg, .info button svg { width: 10px; height: 10px; }
.quick .tiny svg, .info .tiny svg { width: 5px; height: 4px; }
.quick .applogo { align-self: flex-start; width: 22px; height: 22px; margin-right: 1px; z-index: 2; background: linear-gradient(#9b9b9b, #4c4c4c); border: 1px solid #c8c8c8; }
.quick .applogo svg { width: 20px; height: 20px; }
.title { flex: 1; display: flex; justify-content: center; gap: 9px; color: #333; line-height: 13px; }
.info { width: 237px; display: flex; align-items: center; gap: 3px; background: linear-gradient(#8f8f8f, #6e6e6e); }
.expand { width: 6px; height: 13px; background: #5c5c5c; line-height: 12px; }
.keyword { width: 92px; height: 11px; background: #8d8d8d; border: 1px solid #5d5d5d; padding: 0 2px; }
.keyword, .cmdbar input { font-style: italic; }
.keyword::placeholder { color: #d4d4d4; opacity: 1; }
.sign { display: flex; align-items: center; gap: 2px; width: 56px; }
.help { width: 9px; height: 9px; border-radius: 50%; background: #3a78c0; border: 1px solid #e8e8e8; font-weight: 700; line-height: 7px; }
.info .help { margin-left: 3px; }
.winbtns { width: 87px; display: flex; justify-content: space-around; align-items: center; padding-left: 2px; }
.winbtns svg, .docbtns svg { width: 7px; height: 7px; }

/* ribbon tabs */
.tabs { display: flex; gap: 1px; height: 11px; flex: none; padding-left: 25px; background: #535353; color: #c4c4c4; border-top: 1px solid #444; line-height: 10px; }
.tabs a { padding: 0 5px; }
.tabs .on { padding: 0 4px; margin-right: 1px; background: #747474; color: #fff; }
.tabs button { padding-left: 10px; }
.tabs button svg { width: 14px; height: 8px; }

/* ribbon */
.ribbon { display: flex; flex: none; height: 53px; background: linear-gradient(#585858, #3e3e3e); border-bottom: 1px solid #6a6a6a; }
.panel { display: flex; flex-direction: column; background: #5b5b5b; border-right: 1px solid #484848; }
.tools { flex: 1; display: flex; padding: 2px 1px 0; }
.panel h2 { display: flex; align-items: center; justify-content: center; gap: 3px; height: 10px; background: #4e4e4e; }
.launch { margin-left: auto; padding-right: 2px; }
.p-props h2 { padding-left: 48px; }
.p-view h2 { padding-left: 3px; }
.p-draw { width: 121px; }
.p-modify { width: 133px; }
.p-annot { width: 101px; }
.p-layers { width: 146px; }
.p-block { width: 86px; }
.p-props { width: 141px; }
.p-groups { width: 36px; }
.p-util { width: 52px; }
.p-clip { width: 43px; }
.p-view { width: 32px; }
.big { display: flex; flex-direction: column; align-items: center; line-height: 6px; flex: none; padding-top: 1px; }
.big svg { width: 18px; height: 18px; margin-bottom: 3px; }
.big .dd { margin-top: 2px; }
.w22 { width: 22px; } .w24 { width: 24px; } .w26 { width: 26px; } .w30 { width: 30px; } .w34 { width: 34px; } .w38 { width: 38px; }
.p-modify .tools { padding-left: 3px; }
.col { display: flex; flex-direction: column; }
.grow { flex: 1; }
.sm { display: flex; align-items: center; gap: 2px; height: 13px; white-space: nowrap; }
.sm svg { width: 10px; height: 10px; }
.p-draw .sm { gap: 4px; }
.end { margin-left: auto; margin-right: 3px; }
.row { display: flex; gap: 3px; }
.sel { background: #4b7cc4; outline: 1px solid #7fa8e0; outline-offset: -1px; }
.p-groups .sm, .p-props .sm, .p-util .sm { padding: 0 1px; }
.combo { display: flex; align-items: center; gap: 3px; height: 11px; margin: 1px 0; padding: 0 2px; background: linear-gradient(#474747, #5a5a5a); border: 1px solid #3b3b3b; }
.combo svg { width: 8px; height: 8px; }
.combo select { flex: 1; height: 9px; line-height: 9px; }
.swatch { width: 7px; height: 7px; background: #fff; }
.wide { width: 8px; margin: 0 2px 0 4px; height: 8px; }
.rule { width: 32px; height: 1px; background: #ccc; }

/* drawing tabs */
.files { display: flex; align-items: flex-end; height: 15px; flex: none; padding-left: 12px; background: #383838; border-bottom: 2px solid #6a6a6a; }
.files a { width: 65px; height: 11px; padding: 0 5px; border-radius: 6px 8px 0 0; background: linear-gradient(#646464, #505050); color: #b4b4b4; line-height: 11px; }
.files .on { display: flex; justify-content: space-between; background: linear-gradient(#8a8a8a, #666); color: #fff; font-weight: 600; }
.files .x { color: #444; }
.files button { width: 12px; height: 9px; margin: 0 0 1px 4px; border-radius: 4px; background: #4f4f4f; line-height: 8px; }

/* model space */
.stage { position: relative; flex: 1; min-height: 0; background: #212830; border-right: 1px solid #1f6b80; }
.stage::after { content: ""; position: absolute; top: 0; right: 0; bottom: 0; width: 3px; background: #b4cdea; }
.drawing { width: 100%; height: 100%; }
.shape { fill: none; stroke: #b9bbbe; }
.ext { fill: none; stroke: #a9acb0; }
.dims { fill: none; stroke: #b4b7ba; }
.dims path { marker-start: url(#arw); marker-end: url(#arw); }
.dimtext { fill: #e4e4e4; font: 8px "Liberation Sans", Arial, sans-serif; text-anchor: middle; }
.nodes { fill: none; stroke: #d8d8d8; }
.caret { position: absolute; left: 603px; bottom: 0; width: 1px; height: 62px; background: #d2d4d6; }
.vplabel { position: absolute; left: 2px; top: 4px; color: #dcdcdc; line-height: 8px; }
.docbtns { position: absolute; top: 5px; right: 8px; display: flex; gap: 4px; }
.cube { position: absolute; top: 20px; right: 11px; width: 74px; display: flex; flex-direction: column; align-items: center; gap: 9px; }
.cube svg { width: 74px; height: 74px; }
.compass { font: 700 11px "Liberation Sans", Arial, sans-serif; fill: #b9bbbd; text-anchor: middle; }
.face { font: 700 7px "Liberation Sans", Arial, sans-serif; fill: #444a52; text-anchor: middle; }
.wcs { display: flex; gap: 3px; align-items: center; justify-content: center; width: 26px; height: 9px; border-radius: 2px; background: #9ea4b2; color: #e2e4e8; }
.navbar { position: absolute; top: 126px; right: 5px; width: 18px; height: 113px; border-radius: 3px; background: #5c6064; }
.navbar svg { width: 18px; height: 113px; }
.cmd { position: absolute; left: 211px; right: 210px; bottom: 0; font: 6px/9px "Liberation Mono", "DejaVu Sans Mono", monospace; }
.hist { display: flex; flex-direction: column; align-items: flex-start; gap: 2px; padding: 0 0 2px 32px; }
.hist p { padding: 0 1px; background: rgba(110, 114, 118, .45); color: #b0b3b5; white-space: nowrap; }
.cmdbar { display: flex; align-items: center; height: 13px; background: #55585b; color: #ddd; }
.grip { width: 4px; height: 9px; margin: 0 1px; background: repeating-linear-gradient(#999 0 1px, #444 1px 2px); }
.cmdbar button { width: 12px; height: 13px; }
.cmdbar button svg { width: 8px; height: 8px; }
.field { flex: 1; display: flex; align-items: center; gap: 1px; height: 13px; padding-left: 2px; background: #b9babc; }
.field svg { width: 14px; height: 9px; }
.field input { flex: 1; }
.field input::placeholder { color: #6c6e70; opacity: 1; }
.cmdbar .up { width: 8px; background: #b9babc; color: #333; }

/* status bar */
.status { display: flex; justify-content: space-between; height: 15px; flex: none; background: #3a3a3a; }
.layouts { display: flex; padding-left: 7px; gap: 1px; }
.layouts a { height: 10px; padding: 0 6px; border-radius: 0 0 6px 6px; background: #525252; color: #b8b8b8; line-height: 10px; }
.layouts .on { padding: 0 5px; background: #858585; color: #fff; font-weight: 700; }
.toggles { display: flex; align-items: center; gap: 1px; padding-right: 1px; }
.toggles button { height: 12px; background: #4c4c4c; }
.toggles .txt { display: flex; align-items: center; gap: 2px; padding: 0 2px; color: #f0f0f0; }
.cell { width: 13px; padding: 0 1px; }
.cell svg { width: 11px; height: 10px; }
.toggles .dbl { width: 20px; }
.dbl svg { width: 18px; height: 11px; }

/* taskbar */
.taskbar { display: flex; height: 22px; flex: none; background: #080c12; color: #f0f0f0; }
.start { width: 26px; padding: 0 8px; }
.start svg { width: 9px; height: 9px; }
.find { width: 183px; display: flex; align-items: center; gap: 5px; padding: 0 5px; background: #f2f2f2; color: #333; font: 8px/10px Roboto, sans-serif; }
.find svg { width: 11px; height: 11px; }
.find input { flex: 1; }
.find input::placeholder { color: #4a4a4a; opacity: 1; }
.apps { display: flex; gap: 1px; }
.apps button { width: 25px; padding: 0 6px; border-bottom: 1px solid transparent; }
.apps svg { width: 13px; height: 13px; }
.apps .run { border-bottom-color: #76b9ed; }
.apps .active { background: #3b4149; }
.tray { margin-left: auto; display: flex; align-items: center; gap: 3px; padding-right: 10px; }
.tray svg { width: 10px; height: 10px; }
.tray .chev { margin-left: 6px; }
.lang { padding: 0 3px; }
.clock { line-height: 10px; text-align: right; }
.tray .note { position: relative; margin-left: 6px; }
.note svg { width: 13px; height: 13px; }
.note b { position: absolute; right: -2px; bottom: -1px; width: 7px; height: 7px; border-radius: 50%; background: #333; border: 1px solid #ddd; font-size: 5px; line-height: 5px; }
```
